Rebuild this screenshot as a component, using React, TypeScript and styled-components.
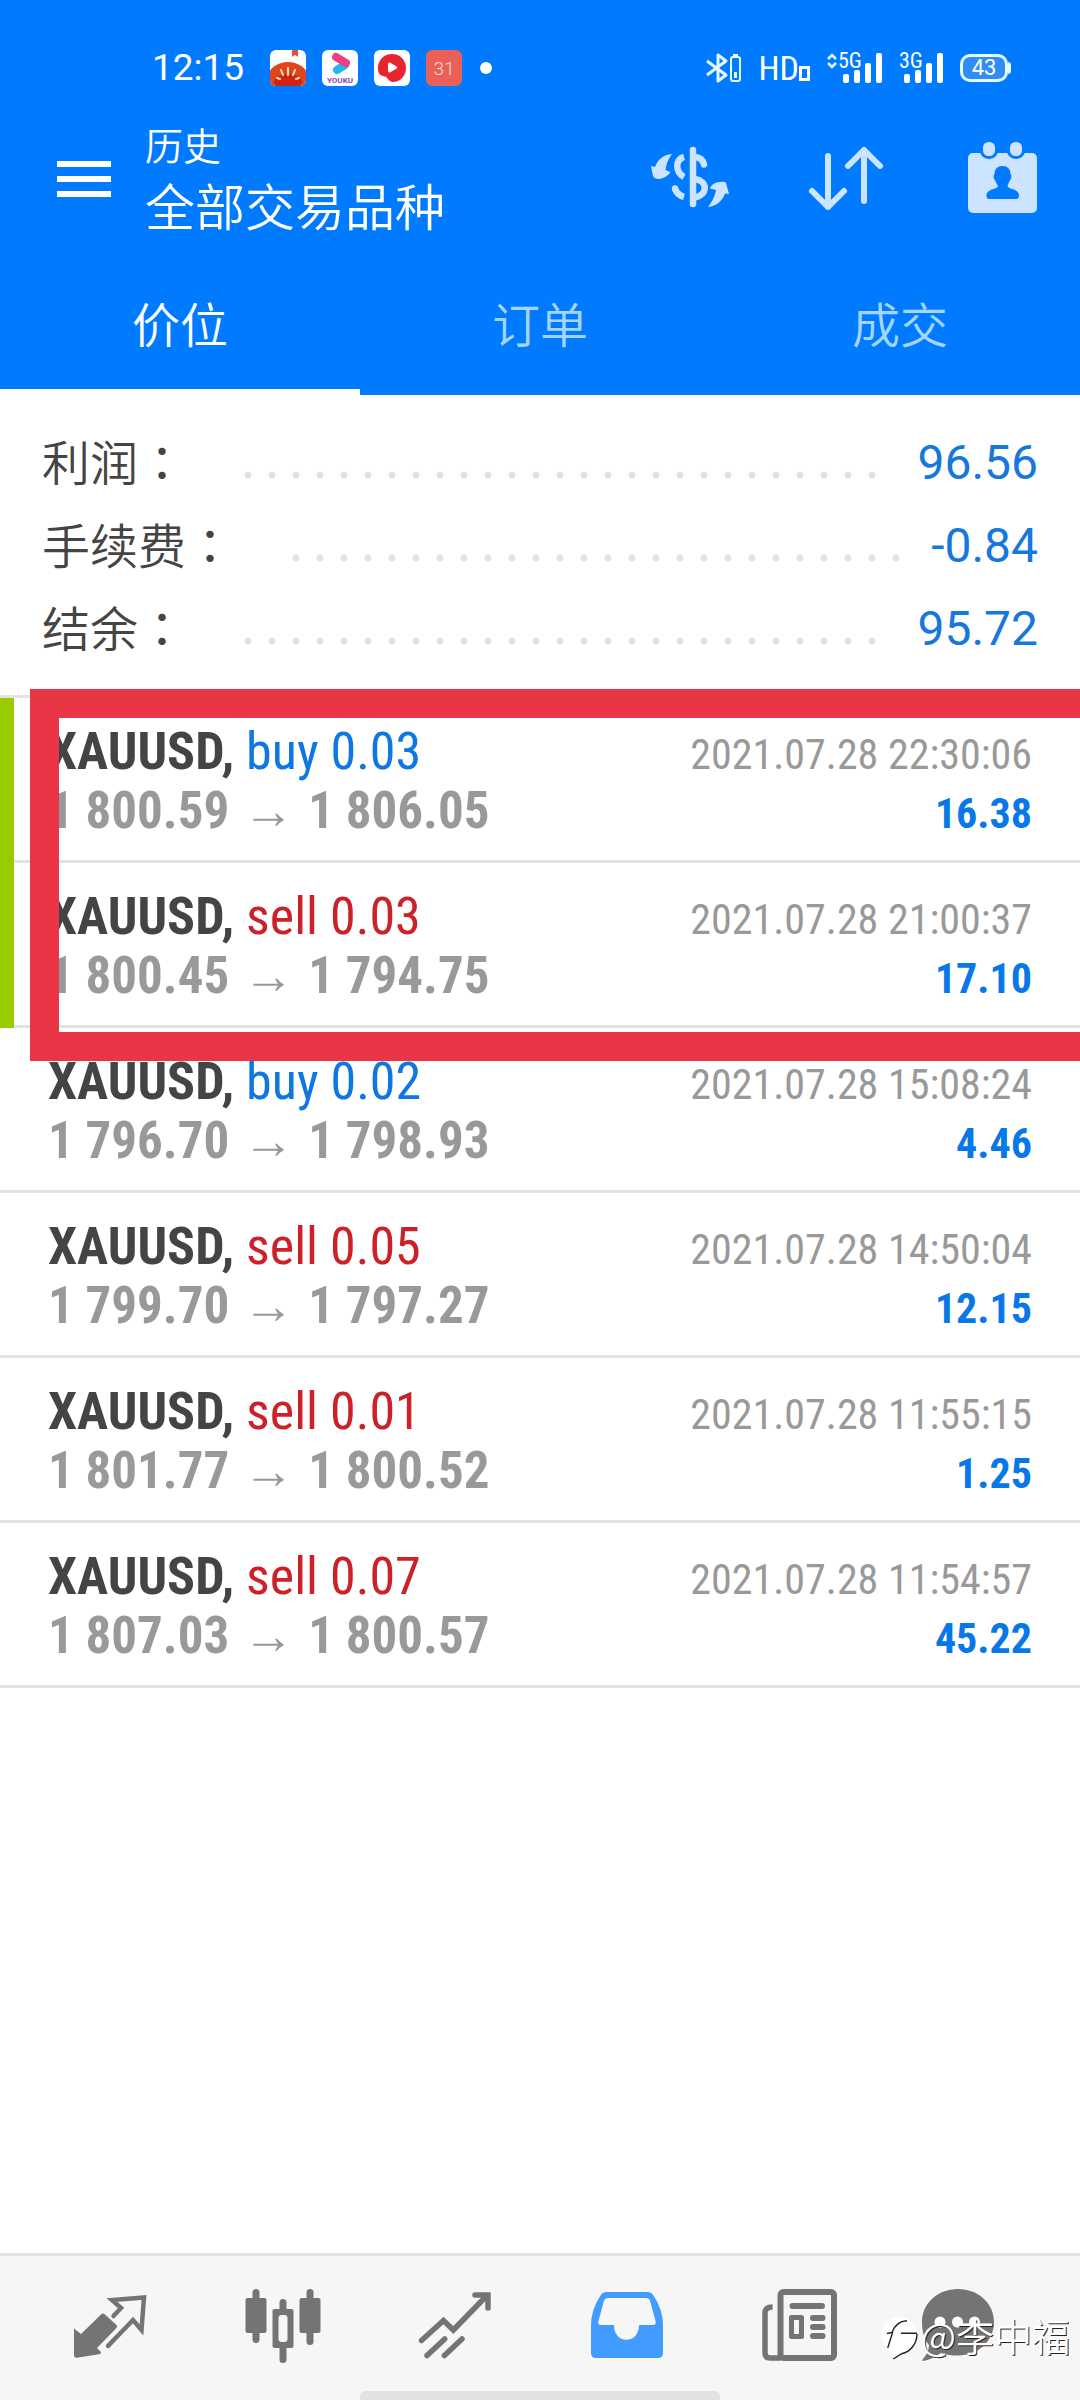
import React from "react";
import styled, { createGlobalStyle } from "styled-components";

const cjk = '"Noto Sans CJK SC", sans-serif';
const condensed = '"Roboto Condensed", Roboto, "Noto Sans CJK SC", sans-serif';
const blue = "#007aff";

const GlobalStyle = createGlobalStyle`
  *, *::before, *::after { box-sizing: border-box; }
  body { margin: 0; background: #fff; font-family: Roboto, ${cjk}; overflow-x: hidden; }
  button { border: 0; padding: 0; margin: 0; background: none; font: inherit; color: inherit; cursor: pointer; }
  h1, p, ul, dl, dd { margin: 0; padding: 0; }
  ul { list-style: none; }
  svg { display: block; }
`;

const Screen = styled.div`
  display: flex;
  flex-direction: column;
  min-height: 100vh;
  position: relative;
  overflow: hidden;
`;

const Header = styled.header`
  background: ${blue};
  color: #fff;
`;

const StatusBar = styled.div`
  display: flex;
  align-items: center;
  justify-content: space-between;
  height: 104px;
  padding: 32px 69px 0 152px;
`;

const StatusGroup = styled.div<{ $gap: number }>`
  display: flex;
  align-items: center;
  gap: ${(p) => p.$gap}px;
`;

const Clock = styled.time`
  font-size: 37px;
  line-height: 40px;
  margin-right: 10px;
`;

const AppBadge = styled.span<{ $bg: string }>`
  display: flex;
  align-items: center;
  justify-content: center;
  width: 36px;
  height: 36px;
  border-radius: 6px;
  overflow: hidden;
  background: ${(p) => p.$bg};
  font-size: 19px;
  font-weight: 300;
  color: #ffd9d4;
`;

const Dot = styled.span`
  width: 12px;
  height: 12px;
  border-radius: 50%;
  background: #fff;
  margin-left: 2px;
`;

const Hd = styled.span`
  display: flex;
  align-items: flex-end;
  font-family: ${condensed};
  font-size: 34px;
  line-height: 34px;
`;

const Signal = styled.span`
  display: flex;
  align-items: flex-end;
  height: 32px;
`;

const SignalLabel = styled.span`
  align-self: flex-start;
  font-family: ${condensed};
  font-size: 22px;
  line-height: 18px;
  width: 23px;
  margin-right: -18px;
`;

const Battery = styled.span`
  position: relative;
  display: flex;
  align-items: center;
  justify-content: center;
  width: 48px;
  height: 28px;
  margin-right: 3px;
  border: 3px solid #e6fbff;
  border-radius: 10px;
  background: #2f8df5;
  font-size: 22px;
  line-height: 22px;

  &::after {
    content: "";
    position: absolute;
    top: 5px;
    right: -6px;
    width: 3px;
    height: 12px;
    border-radius: 0 3px 3px 0;
    background: #e6fbff;
  }
`;

const Toolbar = styled.div`
  display: flex;
  align-items: center;
  height: 150px;
  padding: 0 38px 0 57px;
`;

const MenuButton = styled.button`
  display: grid;
  gap: 9px;
  width: 54px;
  margin-right: 34px;
`;

const MenuLine = styled.span`
  height: 6px;
  background: #fff;
`;

const Titles = styled.div`
  flex: 1;
  padding-bottom: 4px;
  font-family: ${cjk};
  font-weight: 350;
`;

const Section = styled.p`
  font-size: 38px;
  line-height: 54px;
`;

const Title = styled.h1`
  font-size: 50px;
  font-weight: 350;
  line-height: 66px;
`;

const Actions = styled.div`
  display: flex;
  gap: 76px;
  color: #cce4ff;
`;

const Tabs = styled.div`
  display: grid;
  grid-template-columns: repeat(3, 1fr);
`;

const Tab = styled.button<{ $active: boolean }>`
  height: 141px;
  border-bottom: 6px solid ${(p) => (p.$active ? "#fff" : blue)};
  color: ${(p) => (p.$active ? "#fff" : "#a3d5ff")};
  font-family: ${cjk};
  font-size: 48px;
  font-weight: 350;
  line-height: 64px;
`;

const Summary = styled.dl`
  padding: 26px 42px 25px;
  border-bottom: 3px solid #e4e4e4;
`;

const SummaryRow = styled.div`
  display: flex;
  height: 83px;
  align-items: center;
`;

const SummaryLabel = styled.dt`
  padding-bottom: 6px;
  color: #444;
  font-family: ${cjk};
  font-size: 48px;
  font-weight: 350;
  line-height: 64px;
`;

const Colon = styled.span`
  font-family: "Noto Sans CJK TC", sans-serif;
  font-weight: 400;
`;

const Leader = styled.span`
  flex: 1;
  height: 8px;
  margin: 24px 28px 0 42px;
  background: radial-gradient(circle at 20px 4px, #e2e2e2 3px, transparent 4px) 0 0 / 24px 8px repeat-x;
`;

const SummaryValue = styled.dd`
  color: #1677dc;
  font-size: 48px;
  line-height: 64px;
`;

const Marked = styled.div`
  position: relative;
`;

const GreenBar = styled.div`
  position: absolute;
  inset: 0 auto 0 0;
  width: 14px;
  background: #99cc00;
`;

const RedFrame = styled.div`
  position: absolute;
  z-index: 1;
  top: -9px;
  right: 0;
  bottom: -33px;
  left: 30px;
  border: 29px solid #ea3547;
  border-right: 0;
  pointer-events: none;
`;

const Trade = styled.li`
  padding: 24px 48px 20px;
  border-bottom: 3px solid #e4e4e4;
  font-family: ${condensed};
`;

const TradeLine = styled.div`
  display: flex;
  align-items: baseline;
  justify-content: space-between;
  height: 59px;
  font-size: 52px;
  line-height: 59px;
  white-space: nowrap;
`;

const Symbol = styled.span`
  color: #444;
  font-weight: 700;
`;

const Side = styled.span<{ $side: string }>`
  color: ${(p) => (p.$side === "buy" ? "#0f77e2" : "#cc2128")};
`;

const Prices = styled.span`
  color: #99999b;
  font-size: 51px;
  font-weight: 700;
`;

const Arrow = styled.span`
  font-family: "Liberation Sans", sans-serif;
  font-size: 51px;
  line-height: 40px;
  margin: 0 14px;
`;

const Stamp = styled.time`
  color: #999;
  font-size: 42px;
`;

const Profit = styled.span`
  color: #0877e8;
  font-size: 42px;
  font-weight: 700;
`;

const BottomNav = styled.nav`
  position: relative;
  display: flex;
  height: 147px;
  margin-top: auto;
  padding: 0 51px 0 24px;
  border-top: 3px solid #e1e1e1;
  background: #f6f6f6;
`;

const NavGroup = styled.div`
  flex: 1;
  display: grid;
  grid-template-columns: repeat(5, 1fr);
`;

const NavButton = styled.button<{ $active?: boolean }>`
  display: flex;
  justify-content: center;
  width: 100%;
  padding-top: 29px;
  color: ${(p) => (p.$active ? "#429cff" : "#747474")};
`;

const ChatSlot = styled.div`
  width: 143px;
`;

const HomeIndicator = styled.div`
  position: absolute;
  bottom: 0;
  left: 50%;
  width: 360px;
  height: 9px;
  margin-left: -180px;
  border-radius: 6px 6px 0 0;
  background: #e2e2e2;
`;

const Watermark = styled.div`
  position: absolute;
  right: 10px;
  bottom: 34px;
  display: flex;
  align-items: center;
  gap: 2px;
  color: #fff;
  font-family: ${cjk};
  font-size: 38px;
  font-weight: 350;
  line-height: 50px;
  text-shadow: 1px 1px 0 #222;
  pointer-events: none;
`;

const WatermarkName = styled.span`
  padding-bottom: 6px;
`;

const summary = [
  { label: "利润", value: "96.56" },
  { label: "手续费", value: "-0.84" },
  { label: "结余", value: "95.72" },
];

interface Deal {
  side: "buy" | "sell";
  lots: string;
  open: string;
  close: string;
  time: string;
  profit: string;
}

const markedDeals: Deal[] = [
  { side: "buy", lots: "0.03", open: "1 800.59", close: "1 806.05", time: "2021.07.28 22:30:06", profit: "16.38" },
  { side: "sell", lots: "0.03", open: "1 800.45", close: "1 794.75", time: "2021.07.28 21:00:37", profit: "17.10" },
];

const deals: Deal[] = [
  { side: "buy", lots: "0.02", open: "1 796.70", close: "1 798.93", time: "2021.07.28 15:08:24", profit: "4.46" },
  { side: "sell", lots: "0.05", open: "1 799.70", close: "1 797.27", time: "2021.07.28 14:50:04", profit: "12.15" },
  { side: "sell", lots: "0.01", open: "1 801.77", close: "1 800.52", time: "2021.07.28 11:55:15", profit: "1.25" },
  { side: "sell", lots: "0.07", open: "1 807.03", close: "1 800.57", time: "2021.07.28 11:54:57", profit: "45.22" },
];

const TradeRow = ({ deal }: { deal: Deal }) => (
  <Trade>
    <TradeLine>
      <span>
        <Symbol>XAUUSD,</Symbol> <Side $side={deal.side}>{deal.side} {deal.lots}</Side>
      </span>
      <Stamp>{deal.time}</Stamp>
    </TradeLine>
    <TradeLine>
      <Prices>
        {deal.open}
        <Arrow>→</Arrow>
        {deal.close}
      </Prices>
      <Profit>{deal.profit}</Profit>
    </TradeLine>
  </Trade>
);

const Icon = ({ children }: { children: React.ReactNode }) => (
  <svg width="80" height="80" viewBox="0 0 80 80" fill="none" aria-hidden="true">
    {children}
  </svg>
);

const CurrencyIcon = () => (
  <Icon>
    <g fill="currentColor">
      <path d="M1 27L5 28C8 20 13 16 22 15C18 20 16 26 15.500 31L20.500 33C18 37 13 40 8.500 40C6 40 4 39 3 37Z" />
      <path d="M58 68C62 63 65 57 66 51L60 49.500C61 46 65 43 70 43C73 42.500 75 42.500 76 44L79 55L75 54.500C72 62 67 67 58 68Z" />
    </g>
    <g stroke="currentColor" strokeWidth="6.500">
      <path d="M34 17.800C25 20.500 25 33 34 38" />
      <path d="M34 57.800C29 56.500 26 53 25 49.500" />
      <path d="M43 11V65" strokeLinecap="round" />
      <path d="M45 18C50 18.500 53 21 54 25.500" strokeLinecap="round" />
      <path d="M45 40C58 42 58 56 45 58.500" />
    </g>
    <circle cx="25" cy="49.500" r="3.200" fill="currentColor" />
  </Icon>
);

const SortIcon = () => (
  <Icon>
    <g stroke="currentColor" strokeWidth="6" strokeLinecap="round" strokeLinejoin="round">
      <path d="M22 17V68M6 52L22 68L38 52" />
      <path d="M58 62V11M42 27L58 11L74 27" />
    </g>
  </Icon>
);

const CalendarIcon = () => (
  <Icon>
    <rect x="6" y="14" width="69" height="60" rx="5" fill="currentColor" />
    <g fill="currentColor" stroke={blue} strokeWidth="3">
      <rect x="19.500" y="1.500" width="15" height="17" rx="7" />
      <rect x="46.500" y="1.500" width="15" height="17" rx="7" />
    </g>
    <path
      fill={blue}
      d="M40.500 27C45.500 27 48.500 30 48.500 35C50 36 49.500 40 48 41C47.500 43 46 45 45.500 47C46.500 51 57 49 57 57Q57 60 54 60H27Q24.500 60 24.500 57C24.500 49 35 51 36 47C35 45 33.500 43 33 41C31.500 40 31 36 32.500 35C32.500 30 35.500 27 40.500 27Z"
    />
  </Icon>
);

const QuotesIcon = () => (
  <Icon>
    <path
      fill="currentColor"
      d="M4 43.500L11 49L31 29.500Q33 27.500 35 29.500L46 39.500Q48 41.500 46 43.500L27 63L31 67L30.500 69L7 72.700Q4 73 4 70Z"
    />
    <path d="M43.500 31L51 23L42 15L74 12.500L71.500 45L63 35L38 61" stroke="currentColor" strokeWidth="4.500" strokeLinecap="round" />
  </Icon>
);

const ChartIcon = () => (
  <Icon>
    <g fill="currentColor">
      <rect x="2.500" y="13" width="21" height="35" rx="2" />
      <rect x="9.500" y="4" width="7" height="54" rx="3.500" />
      <rect x="56.500" y="13" width="21" height="35" rx="2" />
      <rect x="63.500" y="4" width="7" height="56" rx="3.500" />
      <path d="M36.500 24V17.500a3.500 3.500 0 0 1 7 0V24H48.500a2 2 0 0 1 2 2V61a2 2 0 0 1-2 2H43.500V74.500a3.500 3.500 0 0 1-7 0V63H31.500a2 2 0 0 1-2-2V26a2 2 0 0 1 2-2Z" />
    </g>
    <rect x="35.500" y="30" width="9" height="27" rx="3" fill="#f6f6f6" />
  </Icon>
);

const TradeIcon = () => (
  <Icon>
    <g stroke="currentColor" strokeWidth="5.500" strokeLinecap="round">
      <path d="M6.500 55.500L28.500 35.500L38.300 45L72 10.500" />
      <path d="M60 10H73V23" />
      <path d="M29.700 54L12 70.500M47 54L29.400 70.500" />
    </g>
  </Icon>
);

const HistoryIcon = () => (
  <Icon>
    <path
      fill="currentColor"
      fillRule="evenodd"
      d="M19.500 7H60.500Q64.500 7 66.500 10.500Q76 25 76 40V68Q76 73 71 73H9Q4 73 4 68V40Q4 25 13.500 10.500Q15.500 7 19.500 7ZM20.500 13Q18 13 17 15.500L11.500 36Q10.500 40 14 40H27C27 49 32 54.700 39.500 54.700C47 54.700 52 49 52 40H66Q69.500 40 68.500 36L63 15.500Q62 13 59.500 13Z"
    />
  </Icon>
);

const NewsIcon = () => (
  <Icon>
    <rect x="20.500" y="7" width="53.500" height="66" rx="3" stroke="currentColor" strokeWidth="6" />
    <path d="M12.600 22Q5 22 5 28V68Q5 73 10 73H21" stroke="currentColor" strokeWidth="5.500" />
    <path d="M32.500 21H62M53 33H62.500M53 42H62.500M53 51H62.500" stroke="currentColor" strokeWidth="6" strokeLinecap="round" />
    <rect x="31.500" y="32.500" width="10" height="19" stroke="currentColor" strokeWidth="5" strokeLinejoin="round" />
  </Icon>
);

const ChatIcon = () => (
  <Icon>
    <path
      fill="currentColor"
      d="M40 4C60 4 76 18 76 37C76 56 60 70.500 40 70.500C34 70.500 28 70 23 68C17 72 11 75 5 76C4 76 4 75 5 74C9 69 11 65 11 60C6 54 4 46 4 37C4 18 20 4 40 4Z"
    />
    <g fill="#fff">
      <circle cx="22" cy="37" r="5.500" />
      <circle cx="39.500" cy="37" r="5.500" />
      <circle cx="56.500" cy="37" r="5.500" />
    </g>
  </Icon>
);

const Bars = () => (
  <svg width="39" height="32" viewBox="0 0 39 32" fill="#fff" aria-hidden="true">
    <rect x="0" y="22" width="6" height="9" rx="2" />
    <rect x="11" y="18" width="6" height="13" rx="2" />
    <rect x="22" y="11" width="6" height="20" rx="2" />
    <rect x="33" y="1" width="6" height="30" rx="2" />
  </svg>
);

const App = () => (
  <Screen>
    <GlobalStyle />
    <Header>
      <StatusBar>
        <StatusGroup $gap={16}>
          <Clock>12:15</Clock>
          <AppBadge $bg="#fff">
            <svg width="36" height="36" viewBox="0 0 36 36" aria-hidden="true">
              <path d="M22 0H28V7L25 5L22 7Z" fill="#d8573a" />
              <ellipse cx="18" cy="27" rx="20" ry="15" fill="#e0441b" />
              <ellipse cx="18" cy="32" rx="14" ry="8" fill="#cf2413" />
              <path d="M18 25V18M13 25L11 20M23 25L25 20M10 29L7 28M26 29L29 28" stroke="#ffe3b8" strokeWidth="2" strokeLinecap="round" />
            </svg>
          </AppBadge>
          <AppBadge $bg="#fff">
            <svg width="36" height="36" viewBox="0 0 36 36" aria-hidden="true">
              <path d="M15 20L23 15" stroke="#23b5ee" strokeWidth="8" strokeLinecap="round" />
              <path d="M14 7L24 13" stroke="#ec3f86" strokeWidth="8" strokeLinecap="round" />
              <text x="18" y="33" fontSize="8" fontWeight="700" textAnchor="middle" fill="#7b4bb0" fontFamily="Roboto, sans-serif">YOUKU</text>
            </svg>
          </AppBadge>
          <AppBadge $bg="#fff">
            <svg width="36" height="36" viewBox="0 0 36 36" aria-hidden="true">
              <path d="M18 4C26 4 32 10 32 18C32 26 26 32 19 32C14 32 15 27 9 26C5 25 4 22 4 18C4 10 10 4 18 4Z" fill="#e8252f" />
              <path d="M15.500 14L21.500 17.500L15.500 21Z" fill="#fff" stroke="#fff" strokeWidth="3" strokeLinejoin="round" />
            </svg>
          </AppBadge>
          <AppBadge $bg="#ea5f57">31</AppBadge>
          <Dot />
        </StatusGroup>
        <StatusGroup $gap={17}>
          <svg width="36" height="32" viewBox="0 0 36 32" fill="none" stroke="#e6fbff" aria-hidden="true">
            <path d="M1 9L20 23L12 29V3L20 9L1 23" strokeWidth="3" strokeLinejoin="round" />
            <rect x="25" y="5" width="9" height="24" rx="2" strokeWidth="2" />
            <path d="M27 3.500H32M29.500 20V26" strokeWidth="3" />
          </svg>
          <Hd>
            HD
            <svg width="11" height="20" viewBox="0 0 11 20" fill="none" stroke="#fff" aria-hidden="true">
              <rect x="1.500" y="2.500" width="8" height="12" strokeWidth="3" />
            </svg>
          </Hd>
          <Signal>
            <svg width="11" height="32" viewBox="0 0 11 32" fill="none" stroke="#e6fbff" strokeWidth="2.500" aria-hidden="true">
              <path d="M1 7L5 3L9 7M1 11L5 15L9 11" />
            </svg>
            <SignalLabel>5G</SignalLabel>
            <Bars />
          </Signal>
          <Signal>
            <SignalLabel>3G</SignalLabel>
            <Bars />
          </Signal>
          <Battery>43</Battery>
        </StatusGroup>
      </StatusBar>
      <Toolbar>
        <MenuButton aria-label="菜单">
          <MenuLine />
          <MenuLine />
          <MenuLine />
        </MenuButton>
        <Titles>
          <Section>历史</Section>
          <Title>全部交易品种</Title>
        </Titles>
        <Actions>
          <button aria-label="货币"><CurrencyIcon /></button>
          <button aria-label="排序"><SortIcon /></button>
          <button aria-label="日期"><CalendarIcon /></button>
        </Actions>
      </Toolbar>
      <Tabs role="tablist">
        {["价位", "订单", "成交"].map((name, i) => (
          <Tab key={name} role="tab" aria-selected={i === 0} $active={i === 0}>
            {name}
          </Tab>
        ))}
      </Tabs>
    </Header>
    <main>
      <Summary>
        {summary.map((row) => (
          <SummaryRow key={row.label}>
            <SummaryLabel>{row.label}<Colon>：</Colon></SummaryLabel>
            <Leader />
            <SummaryValue>{row.value}</SummaryValue>
          </SummaryRow>
        ))}
      </Summary>
      <Marked>
        <ul>
          {markedDeals.map((deal) => <TradeRow key={deal.time} deal={deal} />)}
        </ul>
        <GreenBar />
        <RedFrame />
      </Marked>
      <ul>
        {deals.map((deal) => <TradeRow key={deal.time} deal={deal} />)}
      </ul>
    </main>
    <BottomNav>
      <NavGroup>
        <NavButton aria-label="行情"><QuotesIcon /></NavButton>
        <NavButton aria-label="图表"><ChartIcon /></NavButton>
        <NavButton aria-label="交易"><TradeIcon /></NavButton>
        <NavButton aria-label="历史" $active><HistoryIcon /></NavButton>
        <NavButton aria-label="新闻"><NewsIcon /></NavButton>
      </NavGroup>
      <ChatSlot>
        <NavButton aria-label="消息"><ChatIcon /></NavButton>
      </ChatSlot>
      <HomeIndicator />
      <Watermark>
        <svg width="38" height="44" viewBox="0 0 38 44" fill="none" aria-hidden="true">
          <circle cx="19" cy="19" r="18" fill="#fff" />
          <path d="M12 35L21 36L13 43Z" fill="#fff" />
          <path d="M7.700 32L12.700 16M7 17.500L12 16.500Q16 5 27 4.700M21 17.300H37" stroke="#222" strokeWidth="1.400" />
          <path d="M37 18C37 28 30 36 21.700 37.700L13.300 43" stroke="#222" strokeWidth="1.400" />
        </svg>
        <WatermarkName>@李中福</WatermarkName>
      </Watermark>
    </BottomNav>
  </Screen>
);

export default App;
